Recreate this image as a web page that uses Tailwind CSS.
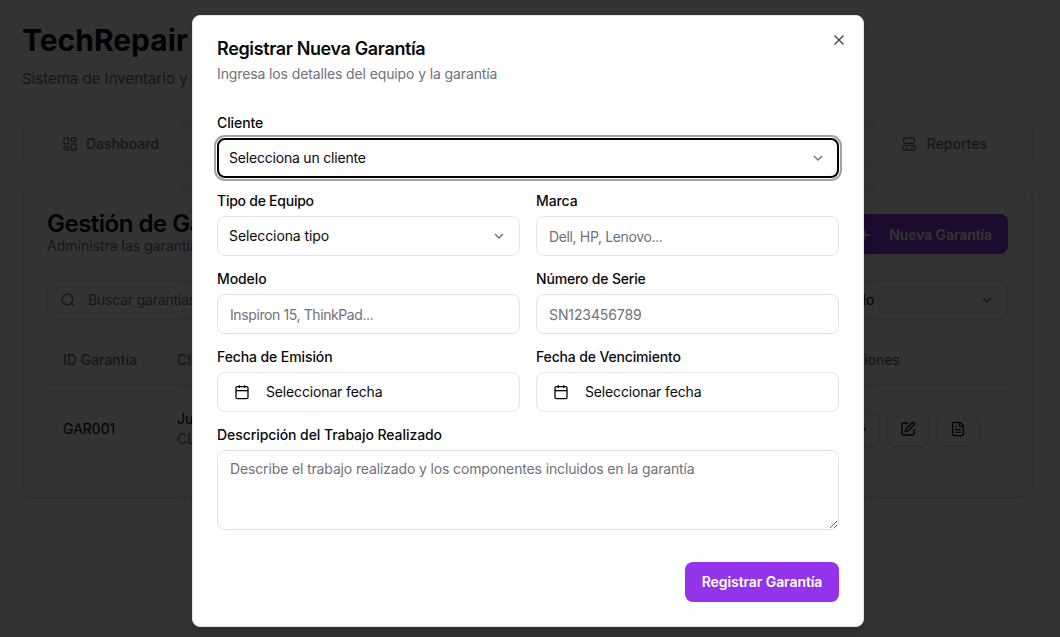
<!DOCTYPE html>
<html lang="es">
<head>
    <meta charset="UTF-8">
    <title>TechRepair</title>
    <script src="https://cdn.jsdelivr.net/npm/@tailwindcss/browser@4"></script>
</head>
<body class="bg-white font-['Inter',sans-serif] text-[#09090b] w-[1060px] h-[637px] overflow-hidden relative">
    <!-- page behind the dialog -->
    <div class="px-[22px] pt-[22px] w-[1033px] box-content">
        <h1 class="text-[30px] leading-[36px] font-bold">TechRepair</h1>
        <p class="mt-[9px] text-[15px] leading-[24px] text-[#71717a]">Sistema de Inventario y Garantías</p>

        <!-- tabs -->
        <div class="mt-[32px] h-[40px] w-[1011px] border border-[#e4e4e7] rounded-lg flex items-center justify-between text-sm font-medium text-[#71717a] pl-[39px] pr-[45px] pt-[1px]">
            <div class="flex items-center gap-2">
                <svg class="w-4 h-4" viewBox="0 0 24 24" fill="none" stroke="currentColor" stroke-width="2"><rect x="3" y="3" width="7" height="9" rx="1"/><rect x="14" y="3" width="7" height="5" rx="1"/><rect x="14" y="12" width="7" height="9" rx="1"/><rect x="3" y="16" width="7" height="5" rx="1"/></svg>
                Dashboard
            </div>
            <div class="flex items-center gap-[10px]">
                <svg class="w-4 h-4" viewBox="0 0 24 24" fill="none" stroke="currentColor" stroke-width="2"><rect x="4" y="3" width="16" height="8" rx="2"/><rect x="3" y="14" width="18" height="7" rx="2"/><path d="M7 17.5h3M14 17.5h3"/></svg>
                Reportes
            </div>
        </div>

        <!-- card -->
        <div class="mt-[24px] h-[311px] w-[1011px] border border-[#e4e4e7] rounded-xl px-[24px] pt-[24px]">
            <div class="flex justify-between">
                <div>
                    <h2 class="text-[24px] leading-[24px] font-semibold tracking-[-0.5px]">Gestión de Garantías</h2>
                    <p class="text-sm leading-[20px] text-[#71717a]">Administra las garantías de los equipos</p>
                </div>
                <div class="mt-[2px] h-[40px] w-[170px] bg-[#9333ea] text-white rounded-lg flex items-center justify-end gap-4 px-4 pt-[1px] text-sm font-semibold tracking-[-0.1px]">
                    <svg class="w-4 h-4" viewBox="0 0 24 24" fill="none" stroke="currentColor" stroke-width="2"><path d="M5 12h14M12 5v14"/></svg>
                    <span>Nueva Garantía</span>
                </div>
            </div>
            <div class="mt-[24px] flex justify-between">
                <div class="h-[40px] w-[700px] border border-[#e4e4e7] rounded-lg flex items-center gap-3 px-3 text-sm text-[#71717a] tracking-[-0.2px]">
                    <svg class="w-4 h-4" viewBox="0 0 24 24" fill="none" stroke="currentColor" stroke-width="2"><circle cx="11" cy="11" r="8"/><path d="m21 21-4.3-4.3"/></svg>
                    Buscar garantías...
                </div>
                <div class="h-[40px] w-[180px] border border-[#e4e4e7] rounded-lg flex items-center justify-between px-3 text-sm">
                    Todo
                    <svg class="w-4 h-4 text-[#71717a]" viewBox="0 0 24 24" fill="none" stroke="currentColor" stroke-width="2"><path d="m6 9 6 6 6-6"/></svg>
                </div>
            </div>
            <div class="mt-[20px] h-[45px] border-b border-[#e4e4e7] flex items-center pl-[16px] pb-[5px] text-sm font-medium text-[#71717a]">
                <span class="w-[114px]">ID Garantía</span><span class="w-[661px]">Cliente</span><span>Acciones</span>
            </div>
            <div class="h-[88px] flex items-center pl-[16px] text-sm">
                <span class="w-[114px]">GAR001</span>
                <div class="w-[650px]">
                    <p>Juan Pérez</p>
                    <p class="text-[#71717a]">CLI001</p>
                </div>
                <div class="flex gap-2 ml-[10px]">
                    <div class="w-[42px] h-[35px] border border-[#e4e4e7] rounded-lg flex items-center justify-center">
                        <svg class="w-4 h-4" viewBox="0 0 24 24" fill="none" stroke="currentColor" stroke-width="2"><path d="M2 12s3.5-7 10-7 10 7 10 7-3.5 7-10 7-10-7-10-7Z"/><circle cx="12" cy="12" r="3"/></svg>
                    </div>
                    <div class="w-[42px] h-[35px] border border-[#e4e4e7] rounded-lg flex items-center justify-center">
                        <svg class="w-4 h-4" viewBox="0 0 24 24" fill="none" stroke="currentColor" stroke-width="2"><path d="M12 3H5a2 2 0 0 0-2 2v14a2 2 0 0 0 2 2h14a2 2 0 0 0 2-2v-7"/><path d="M18.4 2.6a2.1 2.1 0 1 1 3 3L12 15l-4 1 1-4Z"/></svg>
                    </div>
                    <div class="w-[42px] h-[35px] border border-[#e4e4e7] rounded-lg flex items-center justify-center">
                        <svg class="w-4 h-4" viewBox="0 0 24 24" fill="none" stroke="currentColor" stroke-width="2"><path d="M15 2H6a2 2 0 0 0-2 2v16a2 2 0 0 0 2 2h12a2 2 0 0 0 2-2V7Z"/><path d="M14 2v4a2 2 0 0 0 2 2h4M10 9H8M16 13H8M16 17H8"/></svg>
                    </div>
                </div>
            </div>
        </div>
    </div>

    <!-- overlay -->
    <div class="absolute inset-0 bg-black/80"></div>

    <!-- dialog -->
    <div class="absolute left-[192px] top-[15px] w-[672px] h-[612px] bg-white border border-[#e4e4e7] rounded-lg p-[24px] shadow-lg">
        <button class="absolute right-[15px] top-[15px] text-[#3f3f46]">
            <svg class="w-[18px] h-[18px] block" viewBox="0 0 24 24" fill="none" stroke="currentColor" stroke-width="1.7"><path d="M18 6 6 18M6 6l12 12"/></svg>
        </button>

        <h2 class="text-lg leading-[18px] font-semibold tracking-[-0.37px]">Registrar Nueva Garantía</h2>
        <p class="mt-[6px] text-sm leading-[20px] text-[#71717a] tracking-[-0.12px]">Ingresa los detalles del equipo y la garantía</p>

        <div class="mt-[32px] flex flex-col gap-[16px] text-sm tracking-[-0.1px]">
            <div class="flex flex-col gap-[8px]">
                <label class="leading-[14px] font-medium">Cliente</label>
                <div class="h-[40px] rounded-lg border-2 border-black outline-2 outline-offset-1 outline-[#a1a1aa] flex items-center justify-between px-[10px] tracking-[-0.2px]">
                    Selecciona un cliente
                    <svg class="w-4 h-4 text-[#71717a] mr-[1px]" viewBox="0 0 24 24" fill="none" stroke="currentColor" stroke-width="2"><path d="m6 9 6 6 6-6"/></svg>
                </div>
            </div>

            <div class="grid grid-cols-2 gap-x-[16px] gap-y-[16px]">
                <div class="flex flex-col gap-[8px]">
                    <label class="leading-[14px] font-medium tracking-[-0.25px]">Tipo de Equipo</label>
                    <div class="h-[40px] rounded-lg border border-[#e4e4e7] flex items-center justify-between pl-[11px] pr-[12px]">
                        Selecciona tipo
                        <svg class="w-4 h-4 text-[#71717a]" viewBox="0 0 24 24" fill="none" stroke="currentColor" stroke-width="2"><path d="m6 9 6 6 6-6"/></svg>
                    </div>
                </div>
                <div class="flex flex-col gap-[8px]">
                    <label class="leading-[14px] font-medium">Marca</label>
                    <input class="h-[40px] rounded-lg border border-[#e4e4e7] px-[12px] tracking-[-0.36px] placeholder:text-[#71717a]" placeholder="Dell, HP, Lenovo...">
                </div>
                <div class="flex flex-col gap-[8px]">
                    <label class="leading-[14px] font-medium">Modelo</label>
                    <input class="h-[40px] rounded-lg border border-[#e4e4e7] px-[12px] tracking-[-0.4px] placeholder:text-[#71717a]" placeholder="Inspiron 15, ThinkPad...">
                </div>
                <div class="flex flex-col gap-[8px]">
                    <label class="leading-[14px] font-medium tracking-[-0.17px]">Número de Serie</label>
                    <input class="h-[40px] rounded-lg border border-[#e4e4e7] px-[12px] placeholder:text-[#71717a]" placeholder="SN123456789">
                </div>
                <div class="flex flex-col gap-[8px]">
                    <label class="leading-[14px] font-medium">Fecha de Emisión</label>
                    <div class="h-[40px] rounded-lg border border-[#e4e4e7] flex items-center gap-[16px] px-[16px] tracking-[-0.15px]">
                        <svg class="w-4 h-4" viewBox="0 0 24 24" fill="none" stroke="currentColor" stroke-width="2"><path d="M8 2v4M16 2v4"/><rect x="3" y="4" width="18" height="18" rx="2"/><path d="M3 10h18"/></svg>
                        Seleccionar fecha
                    </div>
                </div>
                <div class="flex flex-col gap-[8px]">
                    <label class="leading-[14px] font-medium tracking-[-0.15px]">Fecha de Vencimiento</label>
                    <div class="h-[40px] rounded-lg border border-[#e4e4e7] flex items-center gap-[16px] px-[16px] tracking-[-0.15px]">
                        <svg class="w-4 h-4" viewBox="0 0 24 24" fill="none" stroke="currentColor" stroke-width="2"><path d="M8 2v4M16 2v4"/><rect x="3" y="4" width="18" height="18" rx="2"/><path d="M3 10h18"/></svg>
                        Seleccionar fecha
                    </div>
                </div>
            </div>

            <div class="flex flex-col gap-[8px]">
                <label class="leading-[14px] font-medium tracking-[-0.07px]">Descripción del Trabajo Realizado</label>
                <textarea class="h-[80px] rounded-lg border border-[#e4e4e7] px-[12px] py-[8px] tracking-[-0.14px] placeholder:text-[#71717a]" placeholder="Describe el trabajo realizado y los componentes incluidos en la garantía"></textarea>
            </div>
        </div>

        <div class="mt-[32px] flex justify-end">
            <button class="h-[40px] w-[154px] bg-[#9333ea] text-white text-sm font-semibold tracking-[-0.08px] rounded-lg">Registrar Garantía</button>
        </div>
    </div>
</body>
</html>
